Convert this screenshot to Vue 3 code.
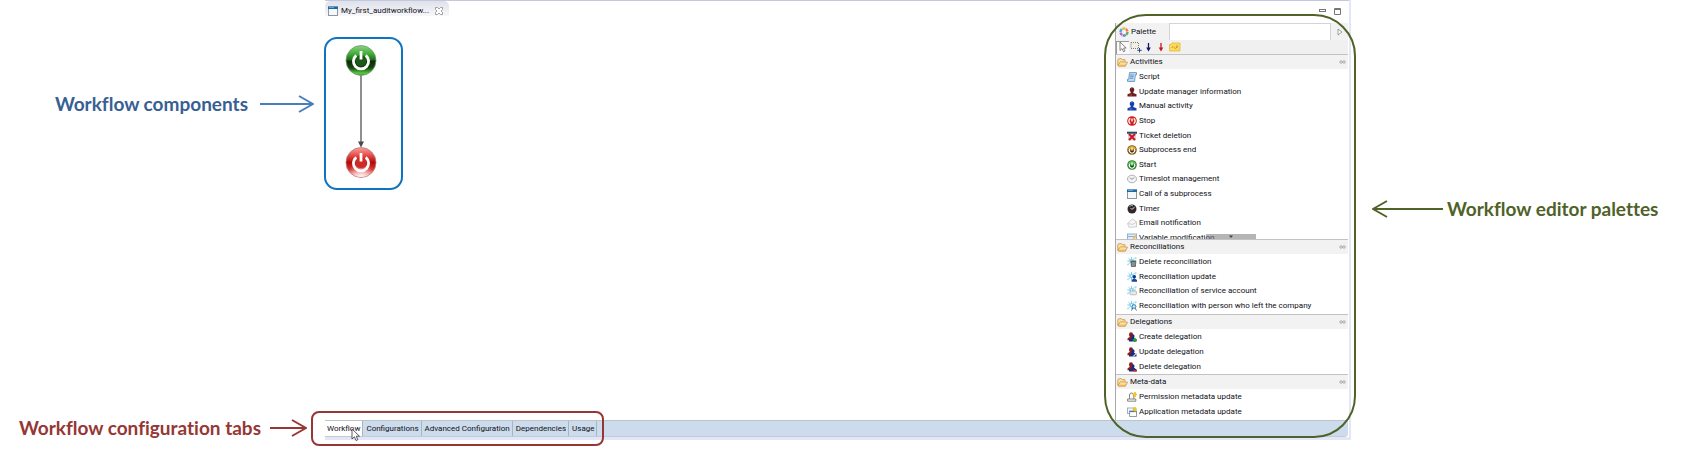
<script setup>
import { ref } from 'vue'

const tabs = ['Workflow', 'Configurations', 'Advanced Configuration', 'Dependencies', 'Usage']
const activeTab = ref('Workflow')

const sections = [
  {
    title: 'Activities',
    size: 'clipped',
    items: [
      ['script', 'Script'],
      ['manager', 'Update manager information'],
      ['manual', 'Manual activity'],
      ['stop', 'Stop'],
      ['ticket', 'Ticket deletion'],
      ['subend', 'Subprocess end'],
      ['start', 'Start'],
      ['timeslot', 'Timeslot management'],
      ['window', 'Call of a subprocess'],
      ['timer', 'Timer'],
      ['mail', 'Email notification'],
      ['variable', 'Variable modification'],
    ],
  },
  {
    title: 'Reconciliations',
    size: 'four',
    items: [
      ['recdelete', 'Delete reconciliation'],
      ['recupdate', 'Reconciliation update'],
      ['recservice', 'Reconciliation of service account'],
      ['recperson', 'Reconciliation with person who left the company'],
    ],
  },
  {
    title: 'Delegations',
    size: 'three',
    items: [
      ['delcreate', 'Create delegation'],
      ['delupdate', 'Update delegation'],
      ['deldelete', 'Delete delegation'],
    ],
  },
  {
    title: 'Meta-data',
    size: 'two',
    items: [
      ['permission', 'Permission metadata update'],
      ['application', 'Application metadata update'],
    ],
  },
]
</script>

<template>
  <div class="page">
    <svg class="defs" width="0" height="0" aria-hidden="true">
      <defs>
        <linearGradient id="gGreen" x1="0" y1="0" x2="0" y2="1">
          <stop offset="0" stop-color="#8fd08a" />
          <stop offset=".28" stop-color="#3fae35" />
          <stop offset=".48" stop-color="#1f6a1c" />
          <stop offset=".52" stop-color="#0b2a0a" />
          <stop offset=".75" stop-color="#15480f" />
          <stop offset=".92" stop-color="#58c840" />
          <stop offset="1" stop-color="#4a9a3c" />
        </linearGradient>
        <linearGradient id="gRed" x1="0" y1="0" x2="0" y2="1">
          <stop offset="0" stop-color="#f7a3a0" />
          <stop offset=".25" stop-color="#e8504c" />
          <stop offset=".5" stop-color="#b30a08" />
          <stop offset=".75" stop-color="#dc3532" />
          <stop offset="1" stop-color="#fbc9c6" />
        </linearGradient>
        <radialGradient id="gGlow" cx=".5" cy="1" r=".5">
          <stop offset="0" stop-color="#fff" stop-opacity=".85" />
          <stop offset="1" stop-color="#fff" stop-opacity="0" />
        </radialGradient>
        <linearGradient id="gFolder" x1="0" y1="0" x2="0" y2="1">
          <stop offset="0" stop-color="#fff3c4" />
          <stop offset="1" stop-color="#f3bf5c" />
        </linearGradient>
        <symbol id="i-window" viewBox="0 0 10 10">
          <rect x=".5" y="1" width="9" height="8.5" fill="#f4f8fb" stroke="#8b98a4" />
          <rect x="0" y=".5" width="10" height="2.500" fill="#1c6a9e" />
          <rect x="1" y="1" width="5" height="1" fill="#58a6d4" />
        </symbol>
        <symbol id="i-folder" viewBox="0 0 11 10">
          <path d="M.8 8.200V3.200Q.8 2 2 1.800L4 1.500 5.200 2.600 8 2.800V4.600" fill="#fbe3a2" stroke="#c98f3c" stroke-width=".8" />
          <path d="M.8 8.500 3.400 4.800 10.500 5.200 8.300 9.200 2 9.200Z" fill="url(#gFolder)" stroke="#c98f3c" stroke-width=".8" />
        </symbol>
        <symbol id="i-script" viewBox="0 0 10 10">
          <path d="M2.500.6H9.500V2.700H8.400L7.500 9.400H.5V7.300H1.700Z" fill="#c3dcf3" stroke="#5d93c6" stroke-width=".9" />
          <path d="M3.2 3H6.8M3 4.7H6.5M2.8 6.3H6.2" stroke="#4d80b3" stroke-width=".8" />
        </symbol>
        <symbol id="i-manager" viewBox="0 0 10 10">
          <path d="M2.700 2.8Q2.700.3 5 .3T7.300 2.8Q7.300 4.2 6.300 5V6L9.500 7.2V9.500H.5V7.2L3.700 6V5Q2.700 4.2 2.700 2.8Z" fill="#6b1f1d" />
          <path d="M4 1.5 5 1M2.5 8H5" stroke="#b36a62" stroke-width=".7" />
        </symbol>
        <symbol id="i-manual" viewBox="0 0 10 10">
          <path d="M2.700 2.8Q2.700.3 5 .3T7.300 2.8Q7.300 4.2 6.300 5V6L9.500 7.2V9.500H.5V7.2L3.700 6V5Q2.700 4.2 2.700 2.8Z" fill="#173fae" />
          <path d="M4 1.5 5 1M2.5 8H5" stroke="#6f9cf0" stroke-width=".7" />
        </symbol>
        <symbol id="i-stop" viewBox="0 0 10 10">
          <circle cx="5" cy="5" r="4.8" fill="#cf1c1a" />
          <path d="M3.400 2.400A3 3 0 0 0 3.400 7.600M6.600 2.400A3 3 0 0 1 6.600 7.600M5 2.500V5.5" fill="none" stroke="#fff" stroke-width="1.400" />
        </symbol>
        <symbol id="i-ticket" viewBox="0 0 10 10">
          <path d="M0 1H10V3H9V9.5H1V3H0Z" fill="#cdd8e2" />
          <rect y=".7" width="10" height="2" fill="#2b4a6c" />
          <path d="M2 3 8 9M8 3 2 9" stroke="#d01818" stroke-width="2" />
        </symbol>
        <symbol id="i-subend" viewBox="0 0 10 10">
          <circle cx="5" cy="5" r="4.8" fill="#8a5c0e" />
          <path d="M1 4A4.2 4.2 0 0 1 9 4Z" fill="#d9a63c" /><path d="M1 6H9Q8 9 5 9T1 6" fill="#4a2e05" />
          <path d="M2.800 3.800A2.700 2.700 0 1 0 7.200 3.800M5 2.500V5.3" fill="none" stroke="#fff" stroke-width="1.200" />
        </symbol>
        <symbol id="i-start" viewBox="0 0 10 10">
          <circle cx="5" cy="5" r="4.8" fill="#27852a" />
          <path d="M1 4A4.2 4.2 0 0 1 9 4Z" fill="#62bd5c" /><path d="M1.5 6H8.5Q8 8 5 8T1.5 6" fill="#124a14" />
          <path d="M2.800 3.800A2.700 2.700 0 1 0 7.200 3.800M5 2.500V5.3" fill="none" stroke="#fff" stroke-width="1.200" />
        </symbol>
        <symbol id="i-timeslot" viewBox="0 0 10 10">
          <ellipse cx="5" cy="5" rx="4.5" ry="3.8" fill="#f2f3f4" stroke="#9b9fa3" stroke-width=".8" />
          <path d="M2.8 4 5 5.2 7.3 3.6" fill="none" stroke="#7c8186" stroke-width=".8" />
        </symbol>
        <symbol id="i-timer" viewBox="0 0 10 10">
          <circle cx="5" cy="5" r="4.5" fill="#2a2a2c" />
          <path d="M2.5 2.5Q4 1 6 1.7" stroke="#aaa" stroke-width="1" fill="none" />
          <path d="M5 5.3 7.5 3.3M5 5.3 3.6 4.6" stroke="#fff" stroke-width=".9" />
          <circle cx="5" cy="5.3" r=".9" fill="#c33" />
        </symbol>
        <symbol id="i-mail" viewBox="0 0 10 10">
          <path d="M.5 5.5 5.5 1 9.5 3.8V8.8L2 9.3Z" fill="#f7f7f7" stroke="#b9bcc0" stroke-width=".7" />
          <path d="M.8 5.7 6 6.3 9.3 4" fill="none" stroke="#b9bcc0" stroke-width=".7" />
        </symbol>
        <symbol id="i-variable" viewBox="0 0 10 10">
          <rect x=".5" y="1" width="9" height="8" fill="#dfeaf8" stroke="#8fb0d8" />
          <path d="M1 3.5H9" stroke="#8fb0d8" /><path d="M5.5 5 8.5 2 9.8 3.3 7 6.3Z" fill="#f0c04a" />
        </symbol>
        <symbol id="i-burst" viewBox="0 0 10 10">
          <path d="M4.5 0V8M.3 4H8.7M1.5 1.2 7.5 7M7.5 1.2 1.5 7" stroke="#7fd0ee" stroke-width="1" />
          <path d="M8.500 0V2.500M7.500 1.200H10M0 7.500H2M1 6.500V8.500" stroke="#a5dcf2" stroke-width=".8" />
          <circle cx="4.5" cy="4" r="1.5" fill="#e4f7fd" stroke="#4cb5dd" stroke-width=".7" />
        </symbol>
        <symbol id="i-recdelete" viewBox="0 0 10 10">
          <use href="#i-burst" width="10" height="10" />
          <path d="M3.5 4H9.3M4 4.6H8.8L8.4 9.6H4.4Z" fill="#8b8f92" stroke="#4f5356" stroke-width=".8" />
        </symbol>
        <symbol id="i-recupdate" viewBox="0 0 10 10">
          <use href="#i-burst" width="10" height="10" />
          <circle cx="7.3" cy="4.8" r="1.7" fill="#10347e" /><path d="M4.6 9.8V8L7.3 6.3 10 8V9.8Z" fill="#1646a8" />
        </symbol>
        <symbol id="i-recservice" viewBox="0 0 10 10">
          <use href="#i-burst" width="10" height="10" />
          <rect x="3" y="5" width="6.5" height="3.8" rx="1" fill="#e5e9eb" stroke="#9eabb2" stroke-width=".7" />
        </symbol>
        <symbol id="i-recperson" viewBox="0 0 10 10">
          <use href="#i-burst" width="10" height="10" />
          <circle cx="7" cy="5.5" r="1.8" fill="#d9edf7" stroke="#3678a8" stroke-width=".9" />
          <path d="M5.8 7 4.5 9.6M8 7 9.5 9.6" stroke="#3678a8" stroke-width="1" />
        </symbol>
        <symbol id="i-people" viewBox="0 0 10 10">
          <path d="M2 2.5Q2 .2 4 .2T6 2.5Q6 4 5.2 4.7L8 6.5V8.3H.5V6.5L2.8 4.7Q2 4 2 2.5Z" fill="#8c1d22" />
          <path d="M4.5 4Q4.5 2.3 6 2.3T7.5 4Q7.5 5.5 6.9 6L9.5 7.3V9.5H2V7.5L5 6Q4.5 5 4.5 4Z" fill="#1c2d79" />
        </symbol>
        <symbol id="i-delcreate" viewBox="0 0 10 10">
          <use href="#i-people" width="10" height="10" /><path d="M7.8 5.8V10M5.8 7.9H10" stroke="#23a83a" stroke-width="1.5" />
        </symbol>
        <symbol id="i-delupdate" viewBox="0 0 10 10">
          <use href="#i-people" width="10" height="10" /><path d="M6 9.5 9.5 6.5" stroke="#b9c3d8" stroke-width="1.2" />
        </symbol>
        <symbol id="i-deldelete" viewBox="0 0 10 10">
          <use href="#i-people" width="10" height="10" /><path d="M6 8.7H10" stroke="#d32626" stroke-width="1.5" />
        </symbol>
        <symbol id="i-permission" viewBox="0 0 10 10">
          <path d="M2.5 7V3Q2.5 1 4.5 1T6.8 3V7M.6 9.2V7H8.8V9.2Z" fill="#fafafa" stroke="#77797b" stroke-width=".9" />
          <path d="M8 0V5M5.6 2.5H10" stroke="#f4c414" stroke-width="1.7" />
        </symbol>
        <symbol id="i-application" viewBox="0 0 10 10">
          <rect x=".5" y="1" width="6.5" height="5.5" fill="#f4f8fb" stroke="#8ba0b4" stroke-width=".8" />
          <rect x="2.7" y="4" width="6.8" height="5.5" fill="#fff" stroke="#6d8298" stroke-width=".8" />
          <path d="M2.7 4.6H9.5" stroke="#4b6a8c" />
          <path d="M8 0V4.4M5.8 2.2H10" stroke="#f4c414" stroke-width="1.6" />
        </symbol>
      </defs>
    </svg>

    <aside class="notes left">
      <p class="note blue">
        Workflow components
        <svg width="54" height="18" viewBox="0 0 54 18" aria-hidden="true"><path d="M0 9H52M39 1 53 9 39 17" /></svg>
      </p>
      <p class="note red">
        Workflow configuration tabs
        <svg width="37" height="18" viewBox="0 0 37 18" aria-hidden="true"><path d="M0 9H35M22 1 36 9 22 17" /></svg>
      </p>
    </aside>

    <main class="editor">
      <header class="titlebar">
        <div class="file">
          <svg width="10" height="10" aria-hidden="true"><use href="#i-window" /></svg>
          <span>My_first_auditworkflow...</span>
          <button class="plain" aria-label="Close">
            <svg width="8" height="8" viewBox="0 0 8 8"><path d="M.5.5H2.5L4 2 5.500.5H7.500V2.500L6 4 7.500 5.500V7.500H5.500L4 6 2.500 7.500H.5V5.500L2 4 .5 2.500Z" fill="#fff" stroke="#8a8a8a" stroke-width=".8" /></svg>
          </button>
        </div>
        <div class="winbtns">
          <button class="plain" aria-label="Minimize">
            <svg width="8" height="8" viewBox="0 0 8 8"><rect x=".5" y="1.500" width="6" height="2" fill="#fff" stroke="#777" /></svg>
          </button>
          <button class="plain" aria-label="Maximize">
            <svg width="8" height="8" viewBox="0 0 8 8"><path d="M.5.5H6.500V6.500H.5ZM.5 1.500H6.500" fill="#fff" stroke="#777" /></svg>
          </button>
        </div>
      </header>

      <div class="body">
        <section class="canvas">
          <figure class="flow">
            <svg width="75" height="149" viewBox="0 0 75 149" role="img" aria-label="Start to stop">
              <path d="M35 36V105" stroke="#6a6a6a" stroke-width="1.500" />
              <path d="M32 102.500H38L35 108.500Z" fill="#4a4a4a" />
              <circle cx="35" cy="21.500" r="15" fill="url(#gGreen)" stroke="#6e9c6a" stroke-width=".8" />
              <circle cx="35" cy="21.500" r="5.500" fill="#1c5a1a" />
              <path d="M30.300 16.300A7.600 7.600 0 1 0 39.700 16.300M35 12V20.500" fill="none" stroke="#fff" stroke-width="2.800" />
              <circle cx="35" cy="123.500" r="15" fill="url(#gRed)" stroke="#b07a7a" stroke-width=".8" />
              <circle cx="35" cy="123.500" r="14.500" fill="url(#gGlow)" />
              <circle cx="35" cy="123.500" r="5.500" fill="#d02a26" />
              <path d="M30.300 118.300A7.600 7.600 0 1 0 39.700 118.300M35 114V122.500" fill="none" stroke="#fff" stroke-width="2.800" />
            </svg>
          </figure>
        </section>

        <section class="palette">
          <div class="phead">
            <span class="ptitle">
              <svg width="10" height="10" viewBox="0 0 10 10" aria-hidden="true">
                <g fill="none" stroke-width="2.400" stroke-dasharray="3 50">
                  <circle cx="5" cy="5" r="3.500" stroke="#5cb34f" />
                  <circle cx="5" cy="5" r="3.500" stroke="#4a8fd8" transform="rotate(60 5 5)" />
                  <circle cx="5" cy="5" r="3.500" stroke="#b863c4" transform="rotate(120 5 5)" />
                  <circle cx="5" cy="5" r="3.500" stroke="#4aa8d8" transform="rotate(180 5 5)" />
                  <circle cx="5" cy="5" r="3.500" stroke="#f0b53b" transform="rotate(240 5 5)" />
                  <circle cx="5" cy="5" r="3.500" stroke="#ea7f3b" transform="rotate(300 5 5)" />
                </g>
              </svg>
              Palette
            </span>
            <span class="pfill"></span>
            <button class="plain expand" aria-label="Collapse palette">
              <svg width="6" height="8" viewBox="0 0 6 8"><path d="M1 1 5 4 1 7Z" fill="#fff" stroke="#888" stroke-width=".8" /></svg>
            </button>
          </div>

          <div class="tools">
            <button class="plain tool on" aria-label="Select">
              <svg width="10" height="12" viewBox="0 0 10 12"><path d="M2 1V9.500L4 7.600 5.500 10.800 7 10 5.500 7H8.200Z" fill="#fff" stroke="#666" stroke-width=".8" /></svg>
            </button>
            <button class="plain tool" aria-label="Marquee">
              <svg width="12" height="12" viewBox="0 0 12 12"><rect x="1" y="1.500" width="7.500" height="6" fill="#f3efe0" stroke="#7c7c7c" stroke-dasharray="1 1" /><path d="M9.500 7V11.500M7.300 9.300H11.800" stroke="#2b4a7c" /></svg>
            </button>
            <button class="plain tool" aria-label="Transition">
              <svg width="12" height="12" viewBox="0 0 12 12"><path d="M5.500 2V8" stroke="#14146e" stroke-width="1.300" /><path d="M3.200 6.500H7.800L5.500 10.500Z" fill="#14146e" /></svg>
            </button>
            <button class="plain tool" aria-label="Error transition">
              <svg width="12" height="12" viewBox="0 0 12 12"><path d="M5 2V8" stroke="#c41818" stroke-width="1.300" /><path d="M2.700 6.500H7.300L5 10.500Z" fill="#c41818" /></svg>
            </button>
            <button class="plain tool" aria-label="Note">
              <svg width="12" height="12" viewBox="0 0 12 12"><path d="M.5 3.500H2L3 2H11V10H.5Z" fill="#fbdc5a" stroke="#e3b93c" stroke-width=".8" /><path d="M2.500 7Q4 4 5 6.500T8.500 5.500M7 4.500 9 5.500 7 7" fill="none" stroke="#c07c34" stroke-width=".7" /></svg>
            </button>
          </div>

          <div v-for="s in sections" :key="s.title" class="group">
            <button class="plain ghead">
              <svg width="11" height="10" aria-hidden="true"><use href="#i-folder" /></svg>
              <span>{{ s.title }}</span>
              <svg class="pin" width="7" height="6" viewBox="0 0 7 6" aria-hidden="true"><path d="M3.500 3 2 1.500.600 3 2 4.500ZM3.500 3 5 1.500 6.400 3 5 4.500Z" fill="none" stroke="#888" stroke-width=".8" /></svg>
            </button>
            <div class="clip" :class="s.size">
              <ul>
                <li v-for="[icon, label] in s.items" :key="label">
                  <svg width="10" height="10" aria-hidden="true"><use :href="'#i-' + icon" /></svg>
                  <span>{{ label }}</span>
                </li>
              </ul>
              <button v-if="s.size === 'clipped'" class="plain scroll" aria-label="Scroll down">
                <svg width="6" height="4" viewBox="0 0 6 4"><path d="M1 .5H5L3 3Z" fill="#444" /></svg>
              </button>
            </div>
          </div>
          <span class="outline green"></span>
        </section>
      </div>

      <nav class="tabs">
        <button v-for="t in tabs" :key="t" class="plain tab" :class="{ active: t === activeTab }" @click="activeTab = t">{{ t }}</button>
        <svg class="cursor" width="10" height="14" viewBox="0 0 10 14" aria-hidden="true"><path d="M1 1V11L3.400 8.800 5 12.500 6.800 11.700 5.300 8.200H8.500Z" fill="#fff" stroke="#333" stroke-width=".8" /></svg>
        <span class="outline crimson"></span>
      </nav>
    </main>

    <aside class="notes right">
      <p class="note olive">
        <svg width="71" height="18" viewBox="0 0 71 18" aria-hidden="true"><path d="M71 9H2M15 1 1 9 15 17" /></svg>
        Workflow editor palettes
      </p>
    </aside>
  </div>
</template>

<style>
body {
  margin: 0;
  background: #fff;
}
</style>

<style scoped>
.page {
  display: grid;
  grid-template-columns: 325px minmax(0, 1fr) 357px;
  align-items: stretch;
  padding-bottom: 14px;
  background: #fff;
  font: 8px/10px Roboto, "Open Sans", sans-serif;
  color: #101018;
}
.defs {
  position: absolute;
}
.plain {
  display: flex;
  align-items: center;
  margin: 0;
  padding: 0;
  border: 0;
  background: none;
  font: inherit;
  color: inherit;
}
svg {
  display: block;
  flex: none;
}

.notes {
  display: flex;
  flex-direction: column;
}
.left {
  justify-content: space-between;
  align-items: flex-end;
  padding-top: 92px;
}
.right {
  align-items: flex-start;
  padding: 197px 0 0 21px;
}
.note {
  display: flex;
  align-items: center;
  margin: 0;
  font: bold 19px/24px Lato, "Open Sans", sans-serif;
  font-variant-ligatures: none;
  white-space: nowrap;
}
.note path {
  fill: none;
  stroke: currentColor;
  stroke-width: 2;
}
.blue {
  gap: 12px;
  margin-right: 11px;
  color: #376092;
}
.blue svg {
  color: #4a7ebb;
}
.red {
  gap: 9px;
  margin-right: 18px;
  color: #953735;
}
.olive {
  gap: 4px;
  color: #4f6228;
}

.editor {
  display: flex;
  flex-direction: column;
  border-right: 2px solid #e2e6f7;
  border-bottom: 3px solid #e2e6f7;
}
.titlebar {
  display: flex;
  justify-content: space-between;
  border-top: 1px solid #c3c8e0;
}
.file {
  display: flex;
  align-items: center;
  gap: 3px;
  box-sizing: border-box;
  height: 15px;
  padding: 4px 6px 0 3px;
  border-radius: 5px 5px 0 0;
  background: linear-gradient(#dfe1ea, #f8f8fb);
}
.file button {
  margin-left: 3px;
}
.winbtns {
  display: flex;
  gap: 7px;
  padding: 7px 7px 0 0;
}
.body {
  display: flex;
}
.canvas {
  flex: 1;
}
.flow {
  width: 75px;
  margin: 21px 0 0 -1px;
  border: 2px solid #0f74c0;
  border-radius: 13px;
}

.palette {
  position: relative;
  width: 232px;
  margin: 7px 1px 0 0;
  border-left: 1px solid #aaa;
}
.phead {
  display: flex;
  height: 17px;
  background: #f2f2f2;
}
.ptitle {
  display: flex;
  align-items: center;
  gap: 2px;
  width: 50px;
  padding-left: 3px;
}
.pfill {
  flex: 1;
  border: 1px solid #d4d4d4;
  border-bottom: 0;
  background: #fff;
}
.expand {
  width: 17px;
  justify-content: center;
}
.tools {
  display: flex;
  align-items: center;
  height: 14px;
  background: #f0f0f0;
}
.tool {
  width: 13px;
  height: 13px;
  justify-content: center;
}
.tool.on {
  background: #fafafa;
  box-shadow: inset 1px 1px #999;
}
.ghead {
  box-sizing: border-box;
  width: 100%;
  height: 15px;
  gap: 2px;
  padding: 0 2px 0 1px;
  border-top: 1px solid #c2c2c2;
  background: #f2f2f2;
}
.pin {
  margin-left: auto;
}
.clip {
  position: relative;
  overflow: hidden;
}
.clip ul {
  display: grid;
  grid-auto-rows: 1fr;
  margin: 0;
  padding: 1px 0 0 11px;
  list-style: none;
}
.clip li {
  display: flex;
  align-items: center;
  gap: 2px;
}
.clipped {
  height: 170px;
}
.clipped ul {
  height: 175px;
}
.four {
  padding-bottom: 1px;
}
.four ul {
  height: 58px;
}
.three ul {
  height: 44px;
}
.two {
  padding-bottom: 1px;
}
.two ul {
  height: 29px;
}
.scroll {
  position: absolute;
  left: 90px;
  bottom: 0;
  width: 50px;
  height: 5px;
  justify-content: center;
  background: rgba(120, 120, 120, 0.55);
}

.tabs {
  position: relative;
  display: flex;
  height: 15px;
  margin-right: 1px;
  border-top: 1px solid #bcc4cb;
  border-bottom: 1px solid #c5cad6;
  border-bottom-right-radius: 4px;
  background: #cddcec;
}
.tab {
  padding: 0 2px 0 3px;
  border-right: 1px solid #a9b4bf;
}
.tab.active {
  padding-left: 2px;
  background: #fff;
}
.cursor {
  position: absolute;
  left: 26px;
  top: 7px;
}
.outline {
  position: absolute;
  z-index: 1;
  pointer-events: none;
}
.green {
  inset: -9px -8px -18px -12px;
  border: 2px solid #4f6228;
  border-radius: 42px;
}
.crimson {
  left: -14px;
  top: -10px;
  width: 289px;
  height: 31px;
  border: 2px solid #953735;
  border-radius: 8px;
}
</style>
